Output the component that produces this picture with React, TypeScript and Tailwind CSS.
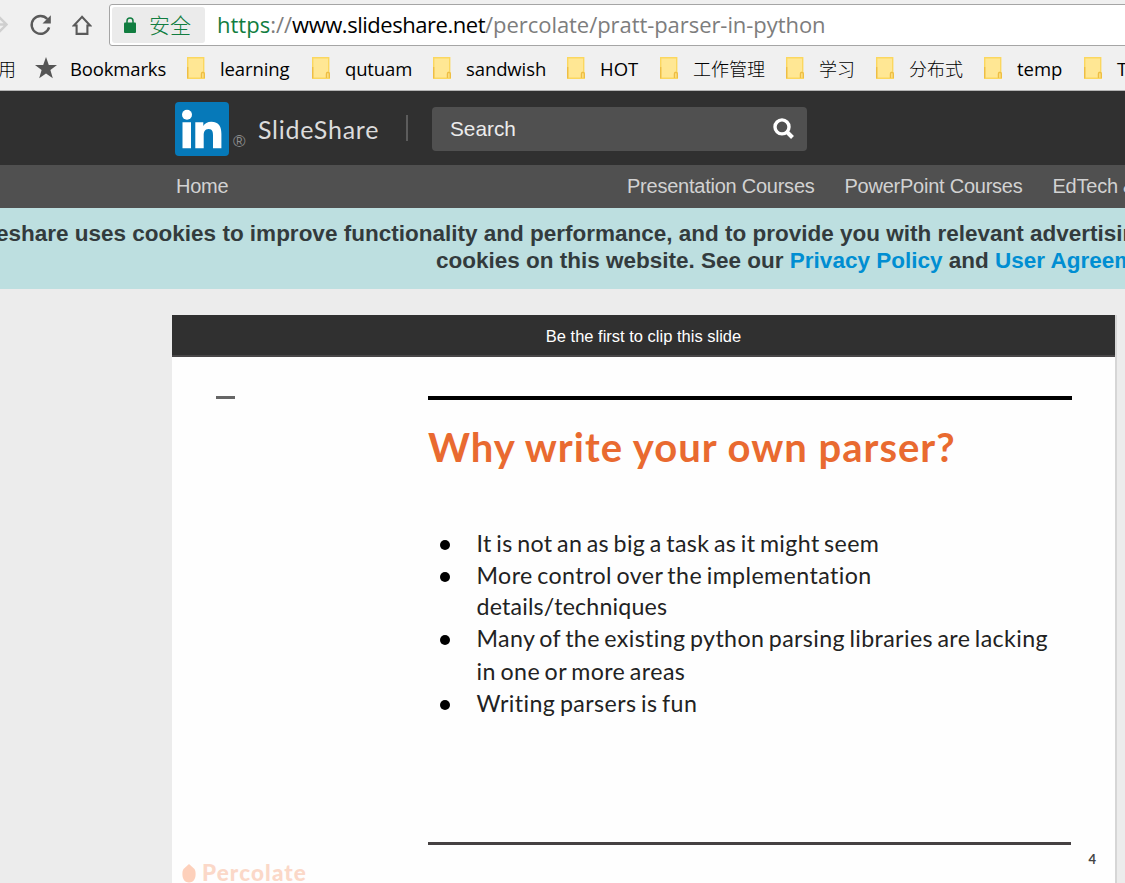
type Folder = { label: string; box: string; text?: string };

const folders: Folder[] = [
  { label: "learning", box: "w-[125px]", text: "tracking-[-0.1px]" },
  { label: "qutuam", box: "w-[121px]", text: "tracking-[-0.15px]" },
  { label: "sandwish", box: "w-[134px]", text: "tracking-[-0.1px]" },
  { label: "HOT", box: "w-[93px]" },
  { label: "工作管理", box: "w-[126px]", text: "text-[18px] font-light" },
  { label: "学习", box: "w-[90px]", text: "text-[18px] font-light" },
  { label: "分布式", box: "w-[108px]", text: "text-[18px] font-light" },
  { label: "temp", box: "w-[100px]" },
  { label: "T", box: "w-[60px]" },
];

type Line = { text: string; row: string; bullet?: boolean };

const lines: Line[] = [
  { text: "It is not an as big a task as it might seem", row: "h-8 tracking-[0.38px]", bullet: true },
  { text: "More control over the implementation", row: "h-8 tracking-[0.42px]", bullet: true },
  { text: "details/techniques", row: "h-[31px] tracking-[0.18px]" },
  { text: "Many of the existing python parsing libraries are lacking", row: "h-[33px] tracking-[0.38px]", bullet: true },
  { text: "in one or more areas", row: "h-8 tracking-[0.43px]" },
  { text: "Writing parsers is fun", row: "h-[33px] tracking-[0.42px]", bullet: true },
];

function FolderIcon() {
  return (
    <svg className="h-[22px] w-[18px] shrink-0" viewBox="0 0 18 22" fill="none">
      <path d="M.7.7h16v14l1.300 1.500v5.100H.7z" fill="#ffe794" />
      <path d="M16.700 15V.7H.7v20.600h16.600v-4.500c0-2-2.800-2-2.800 0v4" stroke="#fbd75f" strokeWidth="1.4" />
      <path d="M.7 10v11.300M14.500 21v-4.200c0-2 2.800-2 2.800 0V21" stroke="#edbd45" strokeWidth="1.3" />
    </svg>
  );
}

function Toolbar() {
  return (
    <div className="flex h-[46px] items-start">
      <svg className="mt-[14px] h-[22px] w-[8px] shrink-0" viewBox="0 0 8 22" fill="none" stroke="#cfcfcf" strokeWidth="2.3">
        <path d="M-10 10.500H6M-1 3l7.500 7.500L-1 18" />
      </svg>
      <svg className="mt-[14px] ml-[21px] h-[22px] w-[23px] shrink-0" viewBox="0 0 23 22" fill="none">
        <path d="M18.300 5A8.900 8.900 0 1 0 20.100 13.400" stroke="#5a5a5a" strokeWidth="2.4" />
        <path d="M21.800 1.200v8.300h-8.300z" fill="#5a5a5a" />
      </svg>
      <svg className="mt-[15px] ml-[20px] h-[21px] w-[20px] shrink-0" viewBox="0 0 20 21" fill="none" stroke="#5a5a5a" strokeWidth="2.1">
        <path d="M10 1.900 1.900 10.500h2.700v8.400h10.800v-8.400h2.700z" />
      </svg>
      <div className="mt-[4px] ml-[17px] flex h-[42px] w-[1030px] shrink-0 items-center rounded-l-[3px] border border-[#a5a5a5] bg-white pl-[2px] text-[22px] whitespace-pre">
        <div className="flex h-9 w-[93px] shrink-0 items-center rounded-[3px] bg-[#ebebeb] pl-[12px] text-[#117d40]">
          <svg className="h-4 w-3 shrink-0" viewBox="0 0 12 16">
            <path d="M3 7V3.900a3 3 0 0 1 6 0V7" fill="none" stroke="#117d40" strokeWidth="1.5" />
            <rect y="5.5" width="12" height="10.5" rx="1" fill="#117d40" />
          </svg>
          <span className="-mt-[2px] ml-[13px] font-['Noto_Sans_CJK_SC',sans-serif] text-[21px] leading-[36px] font-light">安全</span>
        </div>
        <div className="-mt-[2px] ml-[12px] text-[#7d7d7d]">
          <span className="text-[#117d40]">https</span>
          <span>://</span>
          <span className="tracking-[-0.46px] text-black">www.slideshare.net</span>
          <span className="tracking-[-0.06px]">/percolate/pratt-parser-in-python</span>
        </div>
      </div>
    </div>
  );
}

function Bookmarks() {
  return (
    <div className="flex h-[45px] items-center border-b border-[#b4b4b4] text-[18.5px] whitespace-nowrap text-black">
      <span className="mt-[2px] -ml-[2px] w-[18px] shrink-0 text-[18px] font-light">用</span>
      <svg className="ml-[19px] h-[22px] w-[22px] shrink-0" viewBox="0 0 22 22" fill="#555">
        <path d="m11 0 2.800 8H22l-6.600 5 2.400 8.200L11 16.500l-6.800 4.700L6.600 13 0 8h8.200z" />
      </svg>
      <span className="mt-[2px] ml-[13px] w-[117px] shrink-0 tracking-[-0.15px]">Bookmarks</span>
      {folders.map((f) => (
        <div key={f.label} className={`flex shrink-0 items-center gap-[15px] ${f.box}`}>
          <FolderIcon />
          <span className={`mt-[2px] ${f.text ?? ""}`}>{f.label}</span>
        </div>
      ))}
    </div>
  );
}

function SiteHeader() {
  return (
    <>
      <div className="flex h-[74px] items-start bg-[#303030] pl-[175px]">
        <svg className="mt-[11px] h-[54px] w-[54px] shrink-0" viewBox="0 0 54 54">
          <rect width="54" height="54" rx="4" fill="#0679b9" />
          <g fill="#fff">
            <circle cx="12" cy="12.7" r="5" />
            <path d="M7.500 20.300h8.500v26H7.500zM20.300 20.300h8V24c1.400-2.500 4.200-4.300 7.900-4.300 8 0 10.200 5 10.200 12v14.600h-8.400V33.500c0-3.500-.4-6.500-4.300-6.500-4.200 0-5 3.100-5 6.400v12.900h-8.400z" />
          </g>
        </svg>
        <span className="mt-[40px] ml-[4px] w-[14px] font-['Liberation_Sans',sans-serif] text-[17px] leading-[22px] text-[#8a8a8a]">®</span>
        <span className="mt-[22px] ml-[11px] w-[148px] shrink-0 font-['Lato',sans-serif] text-[25px] leading-8 tracking-[0.75px] text-[#dcdcdc]">
          SlideShare
        </span>
        <div className="mt-[24px] h-[26px] w-[2px] shrink-0 bg-[#5c5c5c]" />
        <div className="mt-[16px] ml-[24px] flex h-11 w-[375px] shrink-0 items-center justify-between rounded-[4px] bg-[#505050] pr-[13px] pl-[18px] text-[20.8px] text-[#ececec]">
          <span>Search</span>
          <svg className="mb-px h-[21px] w-[21px]" viewBox="0 0 21 21" fill="none" stroke="#fff">
            <circle cx="9" cy="8.9" r="7" strokeWidth="3.4" />
            <path d="m14 14 5.500 5.500" strokeWidth="4" />
          </svg>
        </div>
      </div>
      <div className="flex h-[43px] items-center bg-[#505050] pb-[2px] pl-[176px] text-[20px] tracking-[-0.24px] whitespace-nowrap text-[#d2d2d2]">
        <span className="w-[451px] shrink-0">Home</span>
        <span className="w-[217.5px] shrink-0">Presentation Courses</span>
        <span className="w-[208px] shrink-0">PowerPoint Courses</span>
        <span className="shrink-0">EdTech &amp;</span>
      </div>
    </>
  );
}

function CookieNotice() {
  return (
    <div className="h-[81px] overflow-hidden bg-[#bddfe0] pt-[12px] text-[22.5px] leading-[27px] font-bold whitespace-nowrap text-[#333b3d]">
      <p className="-ml-[4px]">
        eshare uses cookies to improve functionality and performance, and to provide you with relevant advertisin
      </p>
      <p className="pl-[436px]">
        cookies on this website. See our <a className="text-[#008ed2]">Privacy Policy</a> and{" "}
        <a className="text-[#008ed2]">User Agreem</a>
      </p>
    </div>
  );
}

function Slide() {
  return (
    <div className="mt-[26px] ml-[172px] w-[945px] border-r-2 border-[#d6d6d6]">
      <div className="flex h-[42px] items-center justify-center border-b-2 border-[#484647] bg-[#303030] pt-[2px] text-[16.5px] text-white">
        Be the first to clip this slide
      </div>
      <div className="h-[526px] overflow-hidden bg-[#fefefe] font-['Lato',sans-serif]">
        <div className="flex pt-[39px]">
          <div className="ml-[44px] h-[3px] w-[19px] bg-[#666]" />
          <div className="ml-[193px] h-[4px] w-[644px] bg-black" />
        </div>
        <h1 className="mt-[21px] ml-[256px] text-[40px] leading-[52px] font-bold tracking-[1px] whitespace-nowrap text-[#e96a30]">
          Why write your own parser?
        </h1>
        <div className="mt-[54px] ml-[268px] text-[23.2px] text-[#222]">
          {lines.map((l) => (
            <div key={l.text} className={`flex items-center whitespace-nowrap [word-spacing:-1.8px] ${l.row}`}>
              <span className={`mt-[3px] mr-[26.5px] size-[10px] rounded-full ${l.bullet ? "bg-black" : ""}`} />
              <span>{l.text}</span>
            </div>
          ))}
        </div>
        <div className="mt-[122px] ml-[256px] h-[3px] w-[643px] bg-[#454142]" />
        <div className="flex justify-between pr-[19px] pl-[10px]">
          <div className="mt-[14px] flex h-[28px] items-center gap-[6px] font-['Lato',sans-serif] text-[22.5px] font-black text-[#fbd8c8]">
            <svg className="h-[19px] w-[14px]" viewBox="0 0 14 19" fill="#fdd0bb">
              <path d="m7 0 5.500 5c2 3 2 13.500-5.500 13.500S-.5 8 1.500 5z" />
            </svg>
            <span className="tracking-[1.1px]">Percolate</span>
          </div>
          <span className="mt-[4px] font-['Lato',sans-serif] text-[13px] leading-5 font-bold text-[#444]">4</span>
        </div>
      </div>
    </div>
  );
}

export default function App() {
  return (
    <div className="h-[883px] w-[1125px] overflow-hidden bg-[#ececec] font-['Liberation_Sans',sans-serif]">
      <div className="bg-[#f0f0f0] font-['Open_Sans','Noto_Sans_CJK_SC',sans-serif]">
        <Toolbar />
        <Bookmarks />
      </div>
      <SiteHeader />
      <CookieNotice />
      <Slide />
    </div>
  );
}
